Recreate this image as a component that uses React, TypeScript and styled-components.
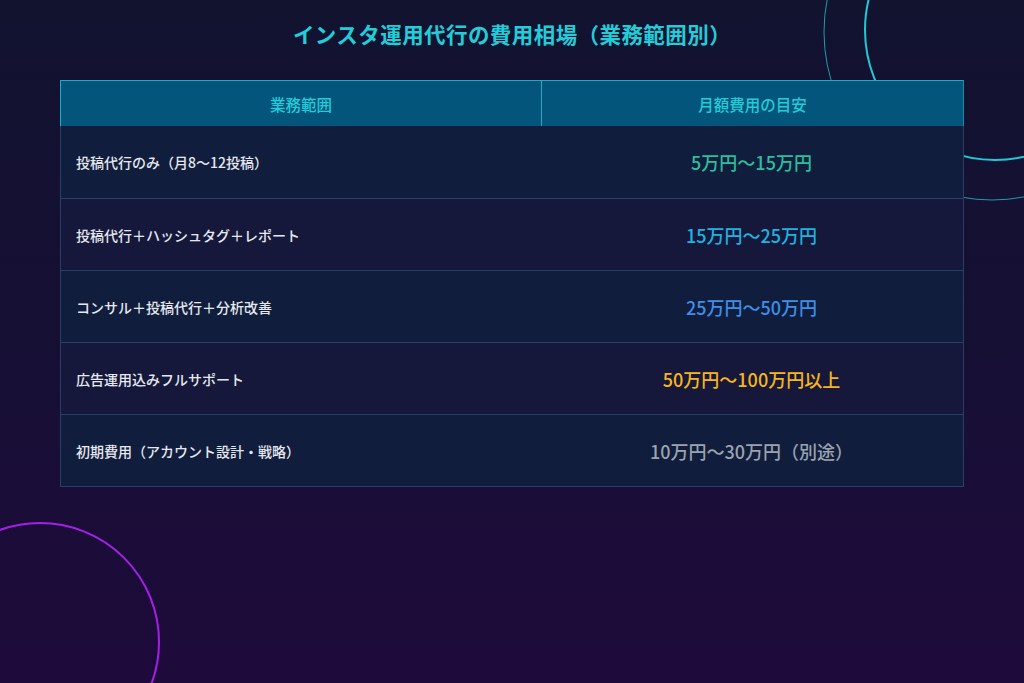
import React from "react";
import styled, { createGlobalStyle } from "styled-components";

const GlobalStyle = createGlobalStyle`
  html, body {
    margin: 0;
    padding: 0;
  }
  body {
    font-family: "Noto Sans CJK JP", "Noto Sans", sans-serif;
  }
`;

interface Row {
  scope: string;
  price: string;
  color: string;
}

const rows: Row[] = [
  { scope: "投稿代行のみ（月8〜12投稿）", price: "5万円〜15万円", color: "#2cbf9e" },
  { scope: "投稿代行＋ハッシュタグ＋レポート", price: "15万円〜25万円", color: "#1fb3e0" },
  { scope: "コンサル＋投稿代行＋分析改善", price: "25万円〜50万円", color: "#3f8fe8" },
  { scope: "広告運用込みフルサポート", price: "50万円〜100万円以上", color: "#f8b61c" },
  { scope: "初期費用（アカウント設計・戦略）", price: "10万円〜30万円（別途）", color: "#9ca3af" },
];

const App = () => {
  return (
    <Page>
      <GlobalStyle />
      <Deco width="1024" height="683" viewBox="0 0 1024 683">
        <circle cx="992" cy="32" r="168" fill="none" stroke="#22c8d8" strokeOpacity="0.75" strokeWidth="1" />
        <circle cx="995" cy="30" r="130" fill="none" stroke="#22c8d8" strokeWidth="2" />
        <circle cx="40" cy="642" r="119" fill="none" stroke="#a51fe8" strokeWidth="2" />
      </Deco>
      <Title>インスタ運用代行の費用相場（業務範囲別）</Title>
      <Table>
        <Header>
          <HeadCell>業務範囲</HeadCell>
          <HeadCell>月額費用の目安</HeadCell>
        </Header>
        {rows.map((r) => (
          <BodyRow key={r.scope}>
            <ScopeCell>{r.scope}</ScopeCell>
            <PriceCell $color={r.color}>{r.price}</PriceCell>
          </BodyRow>
        ))}
      </Table>
    </Page>
  );
};

const Page = styled.div`
  position: relative;
  width: 1024px;
  height: 683px;
  overflow: hidden;
  background: linear-gradient(180deg, #11132f 0%, #170f35 55%, #1e0a3b 100%);
  padding: 19px 60px 0;
  box-sizing: border-box;
  display: flex;
  flex-direction: column;
  align-items: stretch;
`;

const Deco = styled.svg`
  position: absolute;
  left: 0;
  top: 0;
  pointer-events: none;
`;

const Title = styled.h1`
  position: relative;
  margin: 0;
  text-align: center;
  font-size: 21.5px;
  line-height: 30px;
  font-weight: 700;
  color: #22ccd8;
  letter-spacing: 0.02em;
`;

const Table = styled.div`
  position: relative;
  margin-top: 31px;
  border: 1px solid #2a3f68;
  display: flex;
  flex-direction: column;
`;

const Header = styled.div`
  display: grid;
  grid-template-columns: 480px 1fr;
  height: 45px;
  background: #03557c;
  margin: -1px -1px 0;
  border-top: 1px solid #22a6cc;
  border-left: 1px solid #22a6cc;
  border-right: 1px solid #1d86ad;
`;

const HeadCell = styled.div`
  display: flex;
  align-items: center;
  justify-content: center;
  font-size: 15.5px;
  font-weight: 500;
  color: #22ccd8;
  & + & {
    border-left: 1px solid #22a6cc;
  }
`;

const BodyRow = styled.div`
  display: grid;
  grid-template-columns: 479px 1fr;
  height: 72px;
  background: #101d3c;
  & + & {
    border-top: 1px solid #2a3f68;
    height: 71px;
  }
  &:nth-child(odd) {
    background: #15183a;
  }
`;

const ScopeCell = styled.div`
  display: flex;
  align-items: center;
  padding-left: 15px;
  font-size: 14px;
  font-weight: 500;
  color: #e6e8ef;
`;

const PriceCell = styled.div<{ $color: string }>`
  display: flex;
  align-items: center;
  justify-content: center;
  font-size: 18px;
  font-weight: 500;
  color: ${(p) => p.$color};
`;

export default App;
